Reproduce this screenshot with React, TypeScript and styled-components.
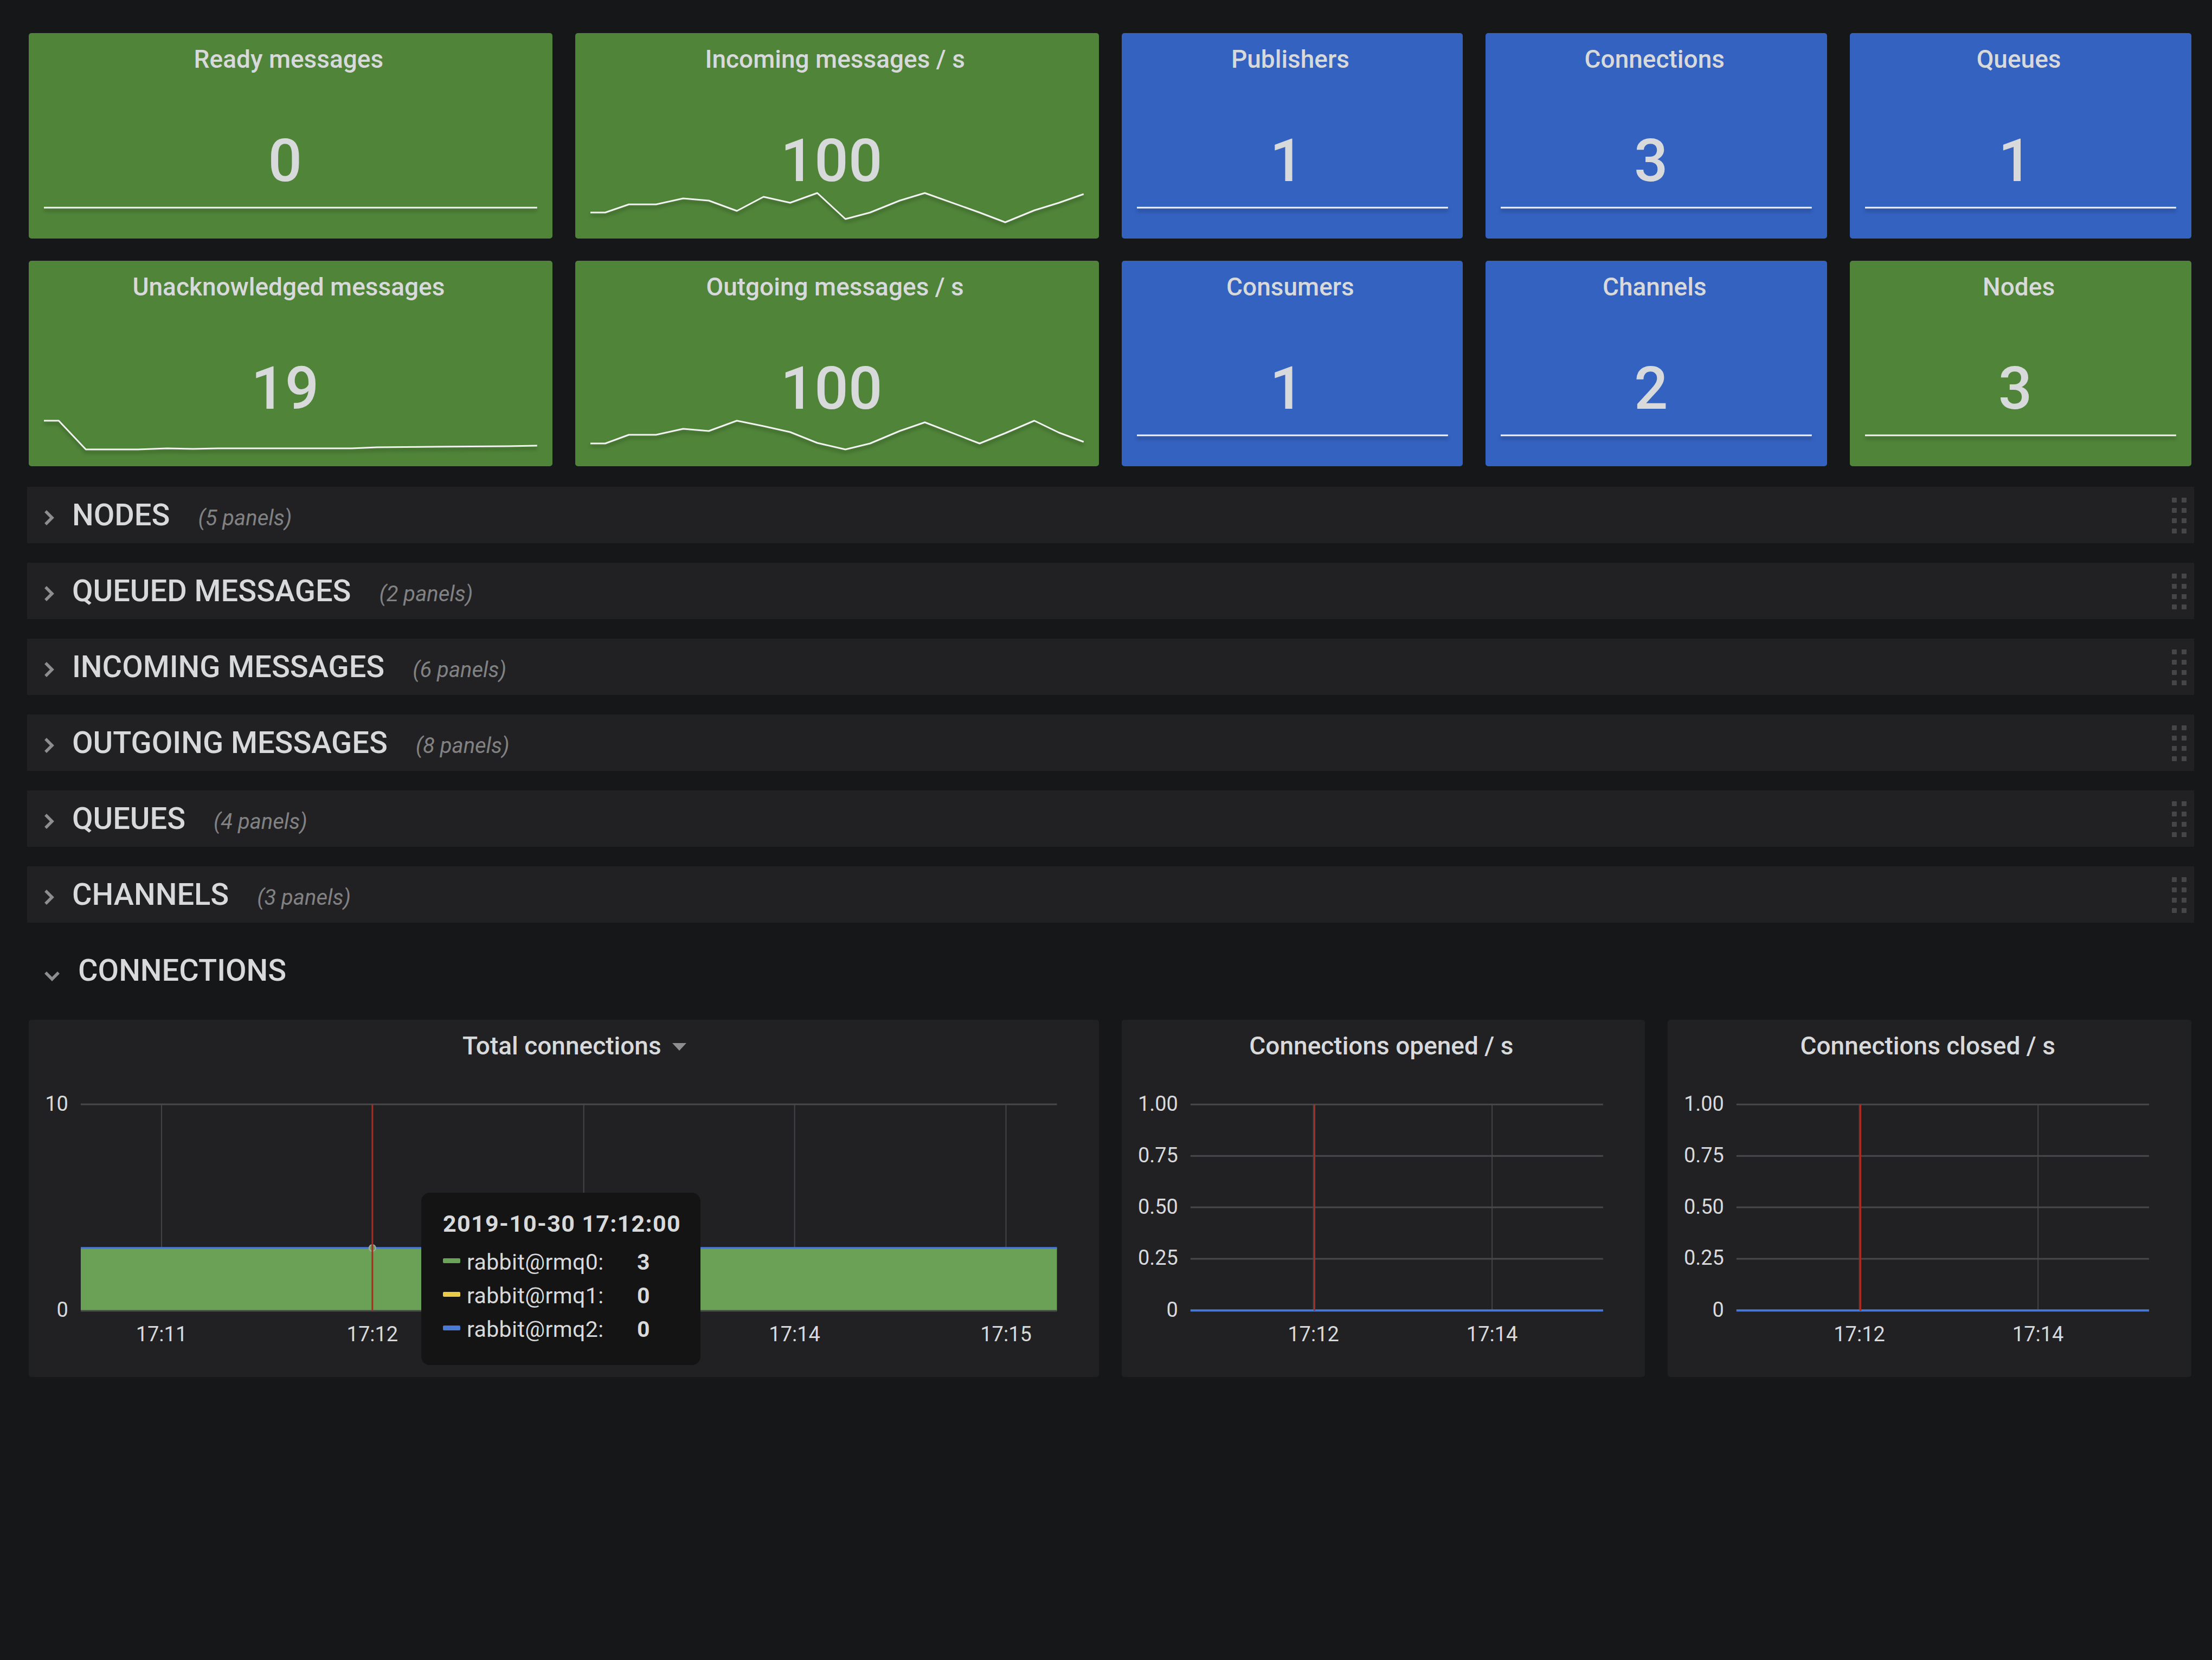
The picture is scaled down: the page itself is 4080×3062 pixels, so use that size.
import React from "react";
import styled, { createGlobalStyle } from "styled-components";

const GlobalStyle = createGlobalStyle`
  html, body {
    margin: 0;
    padding: 0;
    background: #161719;
  }
  body {
    font-family: Roboto, "Liberation Sans", sans-serif;
    color: #d8d9da;
  }
`;

const GREEN = "#508539";
const BLUE = "#3462c0";

const Page = styled.div`
  width: 4080px;
  min-height: 3062px;
  box-sizing: border-box;
  padding: 61px 38px 0 53px;
  background: #161719;
`;

const Grid = styled.div`
  display: grid;
  grid-template-columns: repeat(24, 1fr);
  column-gap: 42px;
  row-gap: 41px;
`;

const StatCard = styled.div<{ $span: number; $color: string }>`
  grid-column: span ${(p) => p.$span};
  height: 379px;
  background: ${(p) => p.$color};
  border-radius: 5px;
  display: flex;
  flex-direction: column;
  align-items: center;
`;

const PanelTitle = styled.div`
  position: relative;
  padding: 20px 7px 0 0;
  font-size: 46px;
  font-weight: 500;
  line-height: 56px;
  color: #d8d9da;
  white-space: nowrap;
`;

const TitleText = styled.span`
  position: relative;
`;

const Caret = styled.span`
  position: absolute;
  left: calc(100% + 20px);
  top: 22px;
  width: 0;
  height: 0;
  border-left: 13px solid transparent;
  border-right: 13px solid transparent;
  border-top: 14px solid #8e8e8e;
`;

const StatValue = styled.div`
  margin-top: 105px;
  padding-right: 20px;
  font-size: 110px;
  font-weight: 500;
  line-height: 110px;
  color: #d8d9da;
`;

const SparkWrap = styled.div`
  align-self: stretch;
  padding: 0 28px;
`;

const Spark = styled.svg`
  display: block;
  width: 100%;
  height: 88px;
  overflow: visible;
  filter: drop-shadow(0 5px 3px rgba(0, 0, 0, 0.32));
`;

const RowList = styled.div`
  display: flex;
  flex-direction: column;
  gap: 36px;
  margin: 38px -5px 0 -3px;
`;

const RowBar = styled.div<{ $open?: boolean }>`
  height: 104px;
  display: flex;
  align-items: center;
  padding: 0 14px 0 30px;
  background: ${(p) => (p.$open ? "transparent" : "#212124")};
`;

const Chevron = styled.svg<{ $open?: boolean }>`
  flex: none;
  width: ${(p) => (p.$open ? 32 : 20)}px;
  height: ${(p) => (p.$open ? 20 : 32)}px;
  margin: ${(p) => (p.$open ? "20px 32px 0 0" : "10px 33px 0 0")};
`;

const RowTitle = styled.div`
  font-size: 56px;
  font-weight: 500;
  line-height: 1;
  color: #d8d9da;
  white-space: nowrap;
`;

const PanelCount = styled.span`
  margin-left: 52px;
  font-size: 40px;
  font-weight: 400;
  font-style: italic;
  color: #828282;
`;

const DragHandle = styled.div`
  margin: 2px 0 0 auto;
  display: grid;
  grid-template-columns: repeat(2, 9px);
  grid-auto-rows: 9px;
  column-gap: 9px;
  row-gap: 10px;
`;

const Dot = styled.span`
  background: #464646;
  border-radius: 1px;
`;

const ChartsGrid = styled(Grid)`
  margin-top: 39px;
`;

const ChartPanel = styled.div<{ $span: number }>`
  grid-column: span ${(p) => p.$span};
  position: relative;
  height: 659px;
  background: #212124;
  border-radius: 5px;
  display: flex;
  flex-direction: column;
  align-items: center;
`;

const ChartSvg = styled.svg`
  display: block;
  align-self: stretch;
  width: 100%;
  height: 583px;
  font-family: Roboto, "Liberation Sans", sans-serif;
`;

const AxisText = styled.text`
  font-size: 38px;
  fill: #d8d9da;
`;

const Tooltip = styled.div`
  position: absolute;
  left: 724px;
  top: 319px;
  width: 515px;
  height: 318px;
  box-sizing: border-box;
  padding: 32px 40px 0;
  background: #141414;
  border-radius: 16px;
`;

const TooltipTime = styled.div`
  font-size: 43px;
  font-weight: 700;
  line-height: 50px;
  margin-bottom: 15px;
  letter-spacing: 1.3px;
  white-space: nowrap;
`;

const TooltipRow = styled.div`
  font-size: 41px;
  line-height: 62px;
  letter-spacing: 0.4px;
  white-space: nowrap;
`;

const Swatch = styled.span<{ $color: string }>`
  display: inline-block;
  width: 32px;
  height: 9px;
  margin-right: 12px;
  border-radius: 2px;
  vertical-align: 12px;
  background: ${(p) => p.$color};
`;

const SeriesName = styled.span`
  display: inline-block;
  width: 314px;
`;

const SeriesValue = styled.span`
  font-weight: 700;
`;

type Pt = [number, number];

const flat: Pt[] = [
  [0, 31],
  [1000, 31],
];

const incoming: Pt[] = [
  [0, 40], [30, 40], [78, 25], [133, 25], [188, 14], [240, 18], [297, 37],
  [351, 11], [405, 22], [460, 4], [517, 52], [567, 40], [627, 18], [678, 4],
  [789, 40], [841, 58], [900, 36], [950, 22], [1000, 6],
];

const outgoing: Pt[] = [
  [0, 46], [30, 46], [78, 30], [133, 30], [188, 19], [240, 23], [297, 4],
  [351, 14], [405, 25], [460, 45], [517, 57], [567, 46], [627, 23], [678, 7],
  [789, 46], [841, 27], [900, 4], [950, 26], [1000, 43],
];

const unacked: Pt[] = [
  [0, 4], [30, 4], [85, 57], [191, 57], [250, 55], [302, 56], [353, 55],
  [499, 55], [624, 55], [676, 53], [794, 52], [941, 51], [1000, 50],
];

type Stat = { title: string; value: string; span: number; color: string; spark: Pt[] };

const stats: Stat[] = [
  { title: "Ready messages", value: "0", span: 6, color: GREEN, spark: flat },
  { title: "Incoming messages / s", value: "100", span: 6, color: GREEN, spark: incoming },
  { title: "Publishers", value: "1", span: 4, color: BLUE, spark: flat },
  { title: "Connections", value: "3", span: 4, color: BLUE, spark: flat },
  { title: "Queues", value: "1", span: 4, color: BLUE, spark: flat },
  { title: "Unacknowledged messages", value: "19", span: 6, color: GREEN, spark: unacked },
  { title: "Outgoing messages / s", value: "100", span: 6, color: GREEN, spark: outgoing },
  { title: "Consumers", value: "1", span: 4, color: BLUE, spark: flat },
  { title: "Channels", value: "2", span: 4, color: BLUE, spark: flat },
  { title: "Nodes", value: "3", span: 4, color: GREEN, spark: flat },
];

const rows = [
  { title: "NODES", count: 5 },
  { title: "QUEUED MESSAGES", count: 2 },
  { title: "INCOMING MESSAGES", count: 6 },
  { title: "OUTGOING MESSAGES", count: 8 },
  { title: "QUEUES", count: 4 },
  { title: "CHANNELS", count: 3 },
];

const StatPanel = ({ stat }: { stat: Stat }) => (
  <StatCard $span={stat.span} $color={stat.color}>
    <PanelTitle>{stat.title}</PanelTitle>
    <StatValue>{stat.value}</StatValue>
    <SparkWrap>
      <Spark viewBox="0 0 1000 88" preserveAspectRatio="none">
        <polyline
          points={stat.spark.map((p) => p.join(",")).join(" ")}
          fill="none"
          stroke="#f2f2f2"
          strokeWidth={3}
          strokeLinejoin="round"
          vectorEffect="non-scaling-stroke"
        />
      </Spark>
    </SparkWrap>
  </StatCard>
);

const CollapsedRow = ({ title, count }: { title: string; count: number }) => (
  <RowBar>
    <Chevron viewBox="0 0 20 32">
      <path d="M4 4 L16 16 L4 28" fill="none" stroke="#8e8e8e" strokeWidth={5.5} />
    </Chevron>
    <RowTitle>
      {title}
      <PanelCount>({count} panels)</PanelCount>
    </RowTitle>
    <DragHandle>
      {Array.from({ length: 8 }).map((_, i) => (
        <Dot key={i} />
      ))}
    </DragHandle>
  </RowBar>
);

type Tick = { label: string; at: number; hidden?: boolean };

type ChartProps = {
  width: number;
  left: number;
  right: number;
  yTicks: Tick[];
  xTicks: Tick[];
  crossX: number;
  area?: React.ReactNode;
  lines?: React.ReactNode;
};

const PLOT_TOP = 80;
const PLOT_BOTTOM = 461;

const TimeChart = ({ width, left, right, yTicks, xTicks, crossX, area, lines }: ChartProps) => (
  <ChartSvg viewBox={`0 0 ${width} 583`}>
    {xTicks.map((t) => (
      <line key={t.label} x1={t.at} x2={t.at} y1={PLOT_TOP} y2={PLOT_BOTTOM} stroke="#444447" strokeWidth={2} />
    ))}
    {area}
    {yTicks.map((t) => (
      <line key={t.label} x1={left} x2={right} y1={t.at} y2={t.at} stroke="#48484b" strokeWidth={3} />
    ))}
    {lines}
    <line x1={crossX} x2={crossX} y1={PLOT_TOP} y2={PLOT_BOTTOM} stroke="#ac2a20" strokeWidth={3} />
    {yTicks.map((t) => (
      <AxisText key={t.label} x={left - 23} y={t.at + 11.5} textAnchor="end">
        {t.label}
      </AxisText>
    ))}
    {/* the label under the hover tooltip is covered in the original */}
    {xTicks
      .filter((t) => !t.hidden)
      .map((t) => (
        <AxisText key={t.label} x={t.at} y={517} textAnchor="middle">
          {t.label}
        </AxisText>
      ))}
  </ChartSvg>
);

const rateTicks: Tick[] = [
  { label: "1.00", at: 80 },
  { label: "0.75", at: 175 },
  { label: "0.50", at: 270 },
  { label: "0.25", at: 365 },
  { label: "0", at: 460.5 },
];

const rateTimes: Tick[] = [
  { label: "17:12", at: 354 },
  { label: "17:14", at: 684 },
];

const RateChart = () => (
  <TimeChart
    width={967}
    left={127}
    right={889}
    yTicks={rateTicks}
    xTicks={rateTimes}
    crossX={356}
    lines={<line x1={127} x2={889} y1={460.5} y2={460.5} stroke="#4978d3" strokeWidth={4} />}
  />
);

const series = [
  { name: "rabbit@rmq0:", value: "3", color: "#6aa457" },
  { name: "rabbit@rmq1:", value: "0", color: "#eacb48" },
  { name: "rabbit@rmq2:", value: "0", color: "#4a7ad6" },
];

export default function App() {
  return (
    <>
      <GlobalStyle />
      <Page>
        <Grid>
          {stats.map((s) => (
            <StatPanel key={s.title} stat={s} />
          ))}
        </Grid>

        <RowList>
          {rows.map((r) => (
            <CollapsedRow key={r.title} title={r.title} count={r.count} />
          ))}
          <RowBar $open>
            <Chevron $open viewBox="0 0 32 20">
              <path d="M4 4 L16 16 L28 4" fill="none" stroke="#8e8e8e" strokeWidth={5.5} />
            </Chevron>
            <RowTitle>CONNECTIONS</RowTitle>
          </RowBar>
        </RowList>

        <ChartsGrid>
          <ChartPanel $span={12}>
            <PanelTitle>
              <TitleText>
                Total connections
                <Caret />
              </TitleText>
            </PanelTitle>
            <TimeChart
              width={1974}
              left={96}
              right={1897}
              yTicks={[
                { label: "10", at: 80 },
                { label: "0", at: 461 },
              ]}
              xTicks={[
                { label: "17:11", at: 245 },
                { label: "17:12", at: 634 },
                { label: "17:13", at: 1024, hidden: true },
                { label: "17:14", at: 1413 },
                { label: "17:15", at: 1803 },
              ]}
              crossX={634}
              area={<rect x={96} y={345} width={1801} height={116} fill="#6aa157" />}
              lines={
                <>
                  <line x1={96} x2={1897} y1={345} y2={345} stroke="#4a78d4" strokeWidth={3.5} />
                  <circle cx={634} cy={345} r={6} fill="#6aa157" stroke="#a8a8a8" strokeWidth={2} />
                </>
              }
            />
            <Tooltip>
              <TooltipTime>2019-10-30 17:12:00</TooltipTime>
              {series.map((s) => (
                <TooltipRow key={s.name}>
                  <Swatch $color={s.color} />
                  <SeriesName>{s.name}</SeriesName>
                  <SeriesValue>{s.value}</SeriesValue>
                </TooltipRow>
              ))}
            </Tooltip>
          </ChartPanel>

          <ChartPanel $span={6}>
            <PanelTitle>Connections opened / s</PanelTitle>
            <RateChart />
          </ChartPanel>

          <ChartPanel $span={6}>
            <PanelTitle>Connections closed / s</PanelTitle>
            <RateChart />
          </ChartPanel>
        </ChartsGrid>
      </Page>
    </>
  );
}
